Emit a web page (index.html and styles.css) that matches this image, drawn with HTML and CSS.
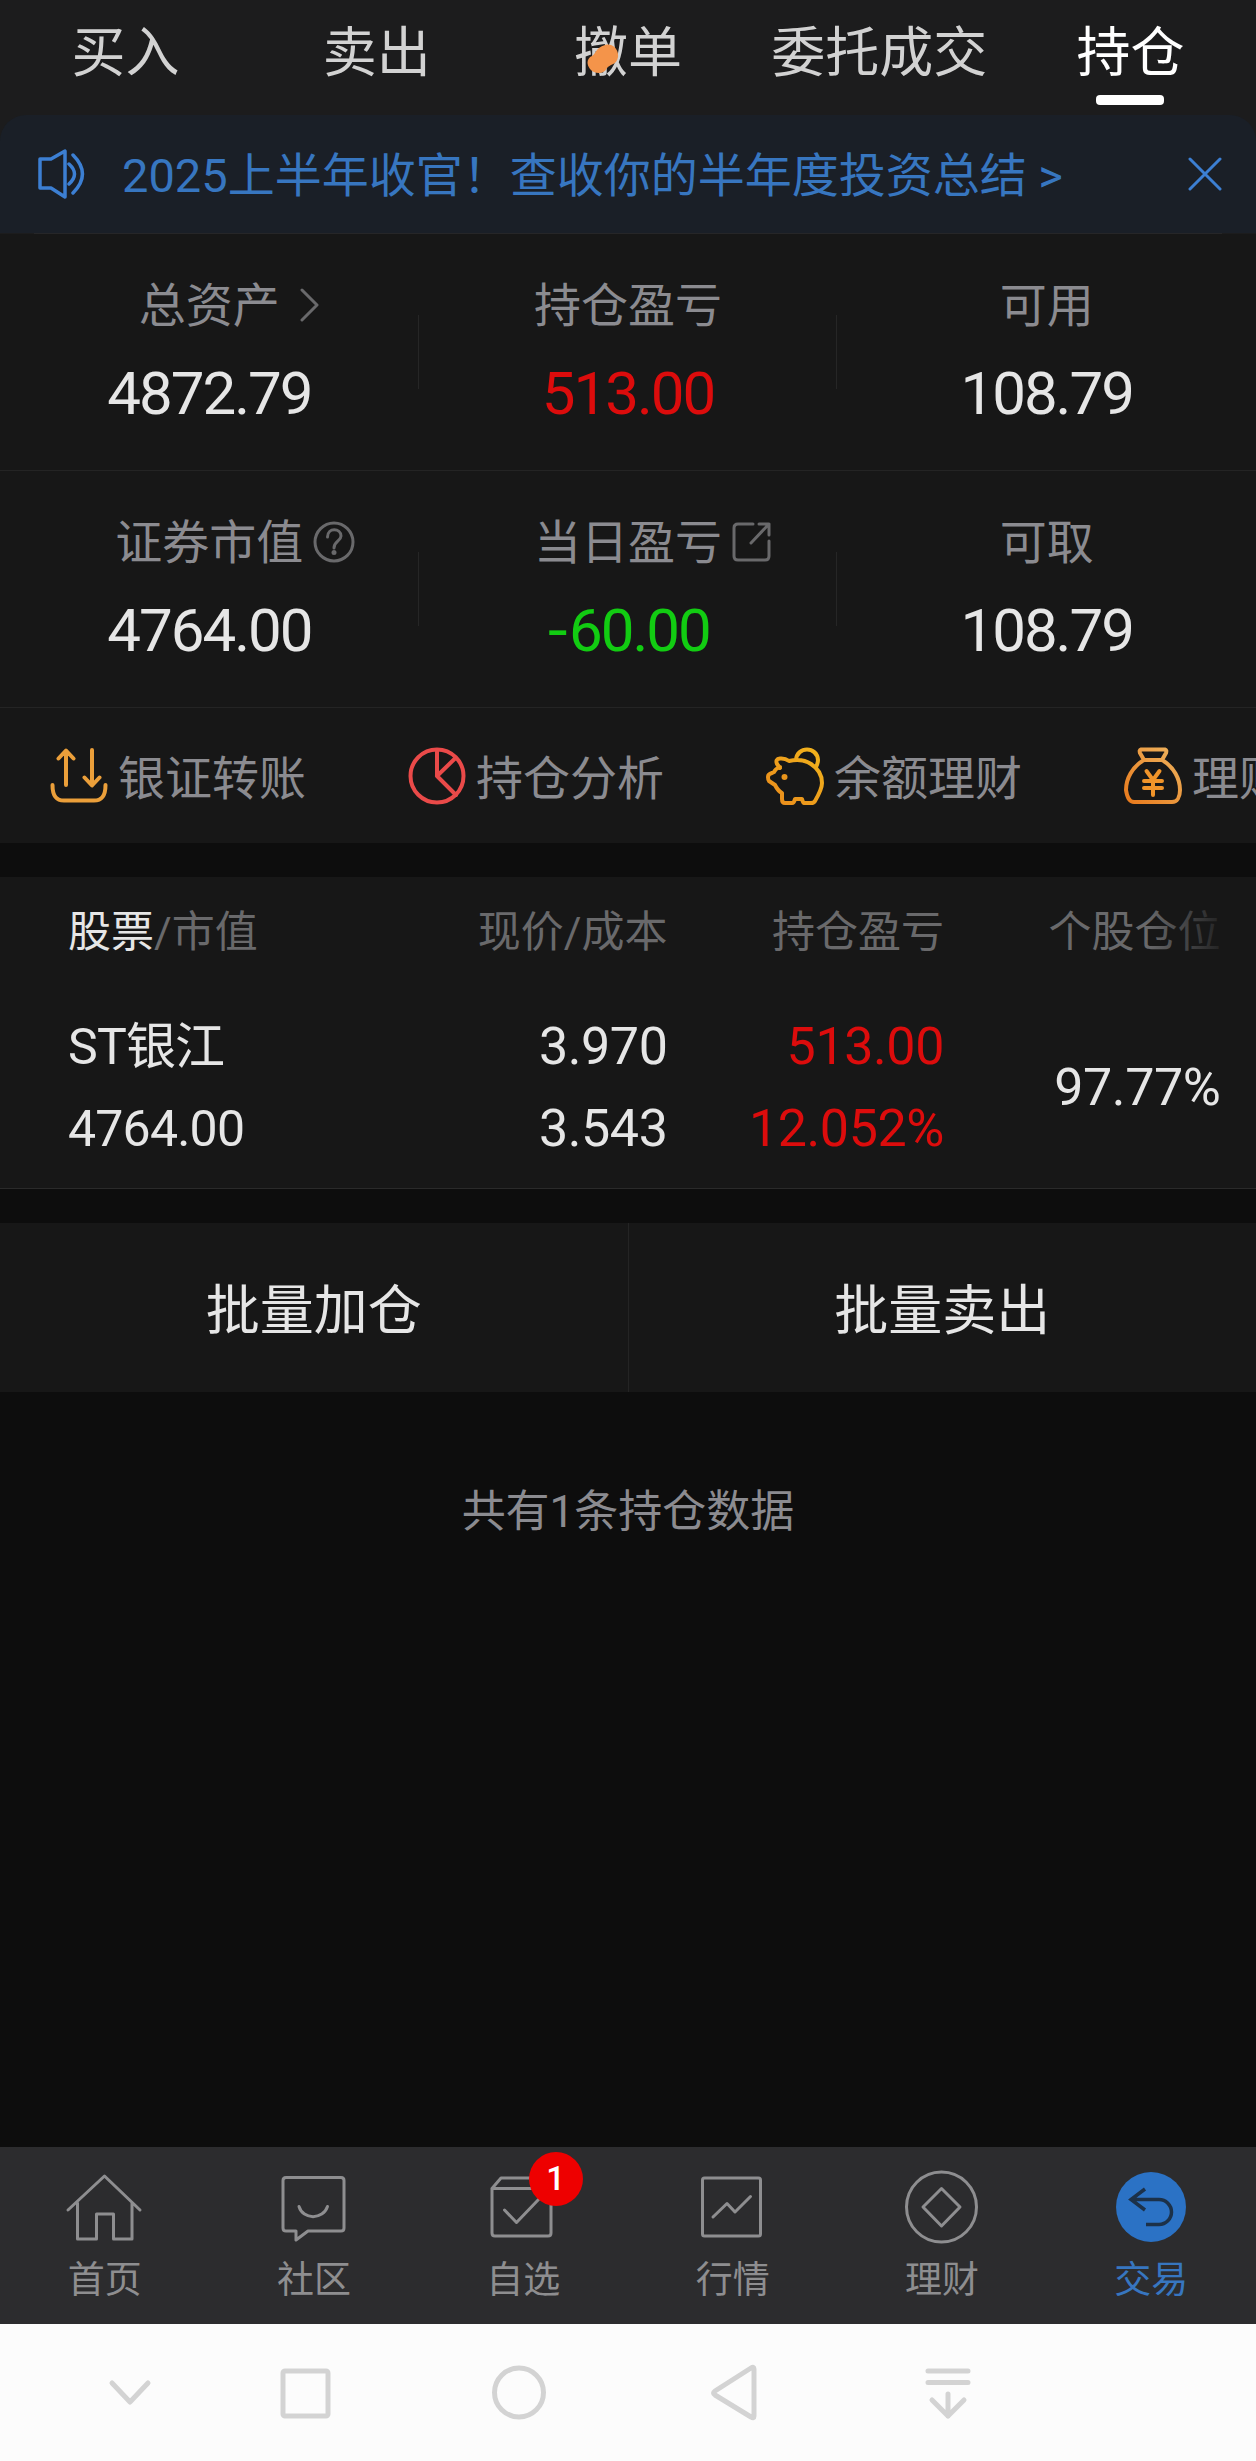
FILE: index.html
```html
<!DOCTYPE html>
<html lang="zh-CN">
<head>
    <meta charset="UTF-8">
    <meta name="viewport" content="width=device-width, initial-scale=1.0">
    <title>持仓</title>
    <link rel="stylesheet" href="styles.css">
</head>
<body>
    <nav class="tabs">
        <a class="tab">买入</a>
        <a class="tab">卖出</a>
        <a class="tab">撤单
            <svg class="tab-mark" viewBox="0 0 32 30"><path d="M18 1C25 -1 32 5 31 13C30 21 23 20 20 24C17 31 7 30 3 25C-1 20 0 14 5 12C9 10 8 4 18 1Z"/></svg>
        </a>
        <a class="tab">委托成交</a>
        <a class="tab active">持仓</a>
    </nav>

    <div class="notice-wrap">
        <div class="notice">
            <svg class="notice-icon" viewBox="0 0 48 50">
                <path d="M2 10H13L27 2V48L13 39H2Z"/>
                <path d="M31 15Q42 25 31 35M35 6Q54 25 35 44"/>
            </svg>
            <span class="notice-text">2025上半年收官！查收你的半年度投资总结 &gt;</span>
            <svg class="notice-close" viewBox="0 0 34 34"><path d="M2 2L32 32M32 2L2 32"/></svg>
        </div>
    </div>

    <section class="assets">
        <div class="asset">
            <div class="asset-label">总资产
                <svg class="arrow-icon" viewBox="0 0 20 34"><path d="M2 2L17 17L2 32"/></svg>
            </div>
            <div class="asset-value">4872.79</div>
        </div>
        <div class="asset">
            <div class="asset-label">持仓盈亏</div>
            <div class="asset-value up">513.00</div>
        </div>
        <div class="asset">
            <div class="asset-label">可用</div>
            <div class="asset-value">108.79</div>
        </div>
        <div class="asset">
            <div class="asset-label">证券市值
                <svg class="help-icon" viewBox="0 0 42 42"><circle cx="21" cy="21" r="19"/><path d="M14.500 16C14.500 6 28 7 28 15C28 20 21 20 21 27"/><circle class="dot" cx="21" cy="31.500" r="2.500"/></svg>
            </div>
            <div class="asset-value">4764.00</div>
        </div>
        <div class="asset">
            <div class="asset-label">当日盈亏
                <svg class="share-icon" viewBox="0 0 40 40"><path d="M21 2H6Q2 2 2 6V34Q2 38 6 38H33Q37 38 37 34V19M27 2H37V13M37 2L19 21"/></svg>
            </div>
            <div class="asset-value down"><span class="sign">-</span>60.00</div>
        </div>
        <div class="asset">
            <div class="asset-label">可取</div>
            <div class="asset-value">108.79</div>
        </div>
    </section>

    <section class="shortcuts">
        <a class="shortcut">
            <svg class="transfer" viewBox="0 0 58 58"><path d="M16 38V4M8.500 11.500L16 3.500L23.500 11.500M42 3V38M34.500 30.500L42 38.500L49.500 30.500"/><path d="M2.500 38C2.500 50 7 53.500 14 53.500H44C51 53.500 55.500 50 55.500 38"/></svg>
            <span>银证转账</span>
        </a>
        <a class="shortcut">
            <svg class="analysis" viewBox="0 0 58 58"><circle cx="29" cy="29" r="26.500"/><path d="M29 3V29L48 48M29 29L47.500 11"/></svg>
            <span>持仓分析</span>
        </a>
        <a class="shortcut">
            <svg viewBox="0 0 58 58">
                <defs><linearGradient id="pig" x1="0" y1="1" x2="1" y2="0"><stop offset="0" stop-color="#e98a1c"/><stop offset="1" stop-color="#f2b51c"/></linearGradient></defs>
                <path stroke="url(#pig)" d="M14 21L11 17Q9 12 14 11.500Q19 11 23 14Q36 11 45 17Q56 24 56 36Q56 42 49 54Q48 56 45 56H38Q37 56 36 52H29Q28 56 26 56H19Q16 56 16 52V46Q12 44 9 38L3 34Q2 33 2 30Q2 27 6 26L8 25Q9 22 14 20M30 13C31 -1 51 -1 52 13Q52 16 50 20"/>
                <circle cx="18.500" cy="30" r="3" fill="#e9951c"/>
            </svg>
            <span>余额理财</span>
        </a>
        <a class="shortcut">
            <svg viewBox="0 0 58 58">
                <defs><linearGradient id="bag" x1="0" y1="1" x2="1" y2="0"><stop offset="0" stop-color="#e87a1c"/><stop offset="1" stop-color="#eeb45f"/></linearGradient></defs>
                <path stroke="url(#bag)" d="M17 2.500H41Q43 3 42 6L38 13H20L16 6Q15 3 17 2.500ZM20 13C8 20 2 32 2 43C3 50 5 55 10 55H48C53 55 56 50 56 43C56 32 50 20 38 13"/>
                <path stroke="#f0942a" d="M22.500 24L29 33L35.500 24M29 33V48M20 34H38M20 41H38"/>
            </svg>
            <span>理财产品</span>
        </a>
    </section>

    <section class="holdings">
        <div class="holdings-head">
            <div><span class="on">股票</span>/市值</div>
            <div>现价/成本</div>
            <div>持仓盈亏</div>
            <div>个股仓位</div>
        </div>
        <div class="holdings-row">
            <div class="cell name"><span>ST银江</span><span>4764.00</span></div>
            <div class="cell"><span>3.970</span><span>3.543</span></div>
            <div class="cell up"><span>513.00</span><span>12.052%</span></div>
            <div class="cell"><span>97.77%</span></div>
        </div>
    </section>

    <div class="batch">
        <button class="batch-btn">批量加仓</button>
        <button class="batch-btn">批量卖出</button>
    </div>

    <p class="total">共有1条持仓数据</p>

    <nav class="tabbar">
        <a class="tabbar-item">
            <svg viewBox="0 0 80 80"><path d="M3 43L39.500 9L75 43M12.500 36V72H31.500V47H48.500V72H67V36"/></svg>
            首页
        </a>
        <a class="tabbar-item">
            <svg viewBox="0 0 80 80"><path d="M12 10.500H67Q70 10.500 70 13.500V61Q70 64 67 64H34L22 73V64H12Q9 64 9 61V13.500Q9 10.500 12 10.500Z"/><path d="M25 39.500C29 53 49 53 53.500 39.500"/></svg>
            社区
        </a>
        <a class="tabbar-item">
            <svg viewBox="0 0 80 80"><path d="M9 21.500L18 11H60L68 21.500M9 21.500H68V66Q68 69 65 69H12Q9 69 9 66V21.500M21.500 43L33.500 55.500L56 32"/></svg>
            <span class="badge">1</span>
            自选
        </a>
        <a class="tabbar-item">
            <svg viewBox="0 0 80 80"><rect x="9.500" y="11" width="58" height="58" rx="2"/><path d="M20 50L34 36.500L42 45L57.500 29.500"/></svg>
            行情
        </a>
        <a class="tabbar-item">
            <svg viewBox="0 0 80 80"><circle cx="39.500" cy="40" r="35"/><path d="M39.500 21.500L58 40L39.500 59L21 40Z"/></svg>
            理财
        </a>
        <a class="tabbar-item active">
            <svg viewBox="0 0 80 80"><circle cx="40" cy="40" r="35"/><path d="M34 22L20 32.500L34 43M20 32.500H48A12.500 12.500 0 0 1 48 57.500H35"/></svg>
            交易
        </a>
    </nav>

    <!-- system navigation -->
    <nav class="sysnav">
        <svg class="collapse" viewBox="0 0 60 60"><path d="M12 21L30 40L48 21"/></svg>
        <svg viewBox="0 0 60 60"><rect x="8" y="9" width="45" height="45" rx="2"/></svg>
        <svg viewBox="0 0 60 60"><circle cx="30" cy="30.500" r="24.500"/></svg>
        <svg viewBox="0 0 60 60"><path d="M50 7V54Q50 57 47 55L11 33Q8 31 11 29L47 6Q50 4 50 7Z"/></svg>
        <svg viewBox="0 0 60 60"><path d="M10 9H50M10 20.500H50M30 32V54M14 38L30 54L46 38"/></svg>
    </nav>
</body>
</html>
```
FILE: styles.css
```css
* {
    box-sizing: border-box;
}

body {
    margin: 0;
    height: 2461px;
    overflow: hidden;
    display: flex;
    flex-direction: column;
    background: #0d0d0d;
    color: #e6e6e6;
    font-family: Roboto, "Noto Sans CJK SC", sans-serif;
}

svg {
    fill: none;
    stroke-linecap: round;
    stroke-linejoin: round;
}

.up {
    color: #dc0c0c;
}

.down {
    color: #12cc12;
}

/* top tabs */
.tabs {
    display: flex;
    height: 115px;
    background: #1c1c1d;
}

.tab {
    position: relative;
    flex: 1;
    text-align: center;
    font-size: 54px;
    line-height: 108px;
    color: #d2d2d2;
}

.tab.active {
    color: #fff;
}

.tab.active::after {
    content: "";
    position: absolute;
    left: 50%;
    bottom: 10px;
    width: 68px;
    height: 10px;
    margin-left: -34px;
    border-radius: 4px;
    background: #fff;
}

.tab-mark {
    position: absolute;
    left: 85px;
    top: 44px;
    width: 32px;
    height: 30px;
    fill: #f4944a;
}

/* notice */
.notice-wrap {
    height: 119px;
    background: #1c1c1d;
}

.notice-wrap::after {
    content: "";
    display: block;
    height: 1px;
    margin: 0 34px;
    background: #262628;
}

.notice {
    display: flex;
    align-items: center;
    height: 118px;
    padding: 0 34px 0 38px;
    border-radius: 26px 26px 0 0;
    background: #1a1f27;
    color: #3776c0;
}

.notice-icon {
    width: 48px;
    height: 50px;
    stroke: #3c7fd3;
    stroke-width: 3.5;
}

.notice-text {
    flex: 1;
    margin-left: 36px;
    padding-top: 3px;
    font-size: 47px;
    line-height: 60px;
    white-space: nowrap;
}

.notice-close {
    width: 34px;
    height: 34px;
    stroke: #3c7fd3;
    stroke-width: 3;
}

/* assets */
.assets {
    display: grid;
    grid-template-columns: repeat(3, 1fr);
    background: #171717;
}

.asset {
    position: relative;
    height: 237px;
    padding-top: 42px;
    border-bottom: 1px solid #242424;
    text-align: center;
}

.asset:not(:nth-child(3n))::after {
    content: "";
    position: absolute;
    right: 0;
    top: 81px;
    width: 1px;
    height: 74px;
    background: #262626;
}

.asset-label {
    position: relative;
    width: fit-content;
    margin: 0 auto;
    font-size: 47px;
    line-height: 60px;
    color: #8b8b90;
}

.asset-label svg {
    position: absolute;
    left: 100%;
    top: 29px;
    transform: translateY(-50%);
    stroke: #69696b;
    stroke-width: 3;
}

.arrow-icon {
    width: 20px;
    height: 34px;
    margin-left: 20px;
}

.help-icon {
    width: 42px;
    height: 42px;
    margin-left: 10px;
}

.help-icon .dot {
    fill: #69696b;
    stroke: none;
}

.share-icon {
    width: 40px;
    height: 40px;
    margin-left: 10px;
}

.asset-value {
    margin-top: 23px;
    font-size: 60px;
    line-height: 70px;
    letter-spacing: -2px;
}

.asset-value .sign {
    font-family: "Noto Sans CJK SC", sans-serif;
    font-size: 66px;
    line-height: 1px;
    letter-spacing: 0;
}

/* shortcuts */
.shortcuts {
    display: flex;
    height: 135px;
    padding-left: 50px;
    overflow: hidden;
    background: #171717;
}

.shortcut {
    flex: none;
    display: flex;
    align-items: center;
    gap: 10px;
    width: 358px;
    font-size: 47px;
    color: #8b8b90;
    white-space: nowrap;
}

.shortcut span {
    padding-bottom: 3px;
}

.shortcut svg {
    width: 58px;
    height: 58px;
    stroke-width: 4;
}

.shortcut .transfer {
    stroke: #eb9f3a;
}

.shortcut .analysis {
    stroke: #ea4a49;
}

/* holdings */
.holdings {
    height: 312px;
    margin-top: 34px;
    border-bottom: 1px solid #2a2a2a;
    background: #171717;
}

.holdings-head,
.holdings-row {
    display: grid;
    grid-template-columns: 323px repeat(3, 276.5px);
    padding-left: 68px;
    text-align: right;
}

.holdings-head {
    position: relative;
    height: 108px;
    font-size: 43px;
    line-height: 111px;
    color: #69696b;
}

.holdings-head::after {
    content: "";
    position: absolute;
    top: 0;
    right: 0;
    width: 110px;
    height: 108px;
    background: linear-gradient(to right, rgba(23, 23, 23, 0), #171717 80%);
}

.holdings-head div:first-child,
.holdings-row .name {
    text-align: left;
}

.holdings-head .on {
    color: #e6e6e6;
}

.holdings-row {
    align-items: center;
    height: 206px;
    font-size: 52px;
    letter-spacing: -0.4px;
}

.holdings-row .name {
    font-size: 50px;
    letter-spacing: -0.8px;
}

.cell span {
    display: block;
    line-height: 82px;
}

/* batch buttons */
.batch {
    display: flex;
    height: 169px;
    margin-top: 34px;
    background: #171717;
}

.batch-btn {
    flex: 1;
    padding: 0 0 3px;
    border: none;
    background: none;
    font: inherit;
    font-size: 54px;
    color: #e6e6e6;
}

.batch-btn:first-child {
    border-right: 1px solid #242424;
}

.total {
    flex: 1;
    margin: 88px 0 0;
    text-align: center;
    font-size: 44px;
    line-height: 64px;
    color: #8b8b90;
}

/* bottom tab bar */
.tabbar {
    display: flex;
    height: 177px;
    background: #2c2c2e;
}

.tabbar-item {
    position: relative;
    flex: 1;
    display: flex;
    flex-direction: column;
    align-items: center;
    padding-top: 20px;
    font-size: 37px;
    line-height: 67px;
    color: #8e8e90;
}

.tabbar-item svg {
    width: 80px;
    height: 80px;
    stroke: #8e8e90;
    stroke-width: 3;
}

.tabbar-item.active {
    color: #3776c0;
}

.tabbar-item.active svg {
    stroke: #1c3149;
    stroke-width: 3.5;
    stroke-linecap: butt;
    stroke-linejoin: miter;
}

.tabbar-item.active circle {
    fill: #2b72c5;
    stroke: none;
}

.badge {
    position: absolute;
    top: 5px;
    left: 110px;
    width: 54px;
    height: 54px;
    border-radius: 50%;
    background: #ee0000;
    color: #fff;
    font-size: 33px;
    font-weight: 500;
    line-height: 54px;
    text-align: center;
}

/* system navigation */
.sysnav {
    display: flex;
    gap: 154.5px;
    height: 137px;
    padding: 38px 0 0 100px;
    background: #fcfcfc;
}

.sysnav svg {
    width: 60px;
    height: 60px;
    stroke: #d3d3d3;
    stroke-width: 5;
}

.sysnav .collapse {
    margin-right: -40px;
}
```
